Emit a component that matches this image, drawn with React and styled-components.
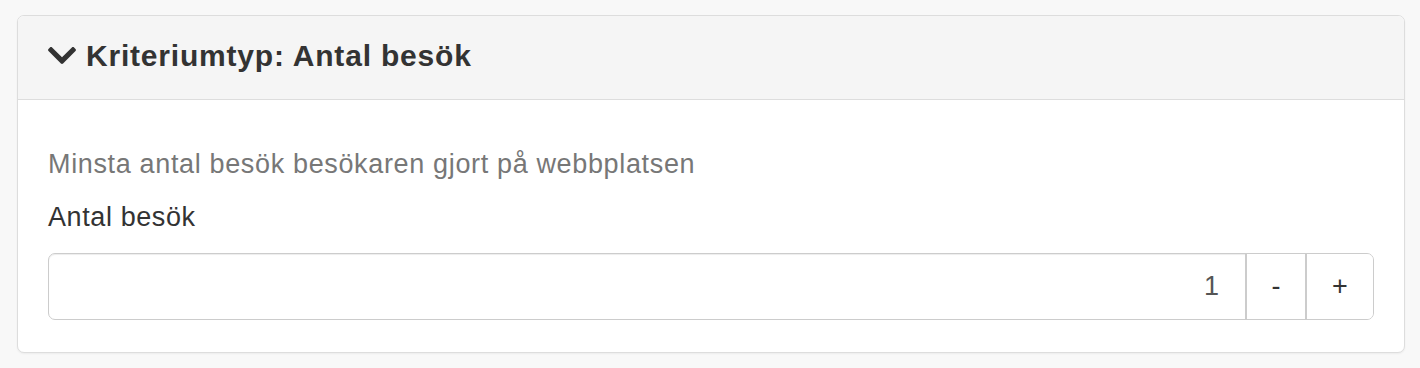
import { createGlobalStyle, styled } from 'styled-components';

const GlobalStyle = createGlobalStyle`
  html, body {
    margin: 0;
    background: #f8f8f8;
  }
  body {
    font-family: "Liberation Sans", Arial, Helvetica, sans-serif;
    color: #333;
  }
`;

function ChevronDown() {
  return (
    <Chevron viewBox="5 123 438 266" preserveAspectRatio="none" aria-hidden="true">
      <path
        fill="currentColor"
        d="M207.029 381.476L12.686 187.132c-9.373-9.373-9.373-24.569 0-33.941l22.667-22.667c9.357-9.357 24.522-9.375 33.901-.04L224 284.505l154.745-154.021c9.379-9.335 24.544-9.317 33.901.04l22.667 22.667c9.373 9.373 9.373 24.569 0 33.941L240.971 381.476c-9.373 9.372-24.569 9.372-33.942 0z"
      />
    </Chevron>
  );
}

export default function App() {
  return (
    <>
      <GlobalStyle />
      <Page>
        <Panel>
          <PanelHeading>
            <Title>
              <ChevronDown />
              Kriteriumtyp: Antal besök
            </Title>
          </PanelHeading>
          <PanelBody>
            <Help>Minsta antal besök besökaren gjort på webbplatsen</Help>
            <Label htmlFor="visits">Antal besök</Label>
            <InputGroup>
              <NumberInput id="visits" type="text" defaultValue="1" />
              <StepButton type="button">-</StepButton>
              <StepButton type="button" $last>+</StepButton>
            </InputGroup>
          </PanelBody>
        </Panel>
      </Page>
    </>
  );
}

const Page = styled.div`
  padding: 15px 15px 17px 17px;
`;

const Panel = styled.section`
  background: #fff;
  border: 1px solid #dddddd;
  border-radius: 7px;
  box-shadow: 0 1px 2px rgba(0, 0, 0, 0.05);
  overflow: hidden;
`;

const PanelHeading = styled.div`
  display: flex;
  align-items: center;
  height: 84px;
  padding: 0 30px 4px;
  box-sizing: border-box;
  background: #f5f5f5;
  border-bottom: 1px solid #dddddd;
`;

const Title = styled.h4`
  display: flex;
  align-items: center;
  gap: 10px;
  margin: 0;
  font-size: 30px;
  font-weight: 700;
  letter-spacing: 0.8px;
  line-height: 40px;
  color: #333;
`;

const Chevron = styled.svg`
  width: 28px;
  height: 17px;
  color: #333;
  flex: none;
`;

const PanelBody = styled.div`
  padding: 44px 30px 32px;
`;

const Help = styled.p`
  margin: 0 0 13px;
  font-size: 27px;
  letter-spacing: 0.65px;
  line-height: 40px;
  color: #777;
`;

const Label = styled.label`
  display: block;
  margin-bottom: 16px;
  font-size: 27px;
  letter-spacing: 0.6px;
  line-height: 40px;
  color: #333;
`;

const InputGroup = styled.div`
  display: flex;
  height: 67px;
  border: 1px solid #cccccc;
  border-radius: 7px;
  box-sizing: border-box;
  overflow: hidden;
  box-shadow: inset 0 1px 1px rgba(0, 0, 0, 0.075);
`;

const NumberInput = styled.input`
  flex: 1;
  min-width: 0;
  border: 0;
  padding: 0 26px 0 24px;
  font-family: inherit;
  font-size: 27px;
  color: #555;
  text-align: right;
  background: transparent;
  outline: none;
`;

const StepButton = styled.button`
  width: ${(p) => (p.$last ? '68px' : '60px')};
  border: 0;
  border-left: 2px solid #cccccc;
  background: #fff;
  font-family: inherit;
  font-size: 27px;
  color: #333;
  padding: 0;
  cursor: pointer;
`;
